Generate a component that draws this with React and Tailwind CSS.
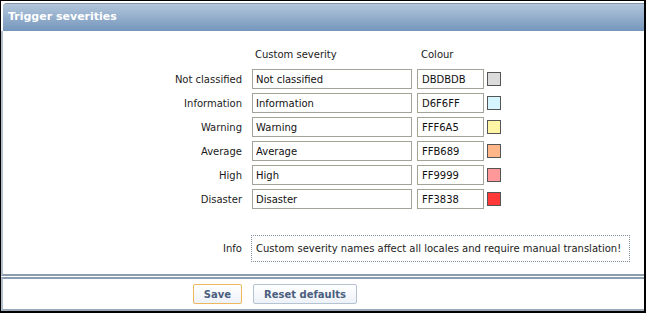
import React from 'react';

const SEVERITIES = [
  { label: 'Not classified', name: 'Not classified', colour: 'DBDBDB' },
  { label: 'Information', name: 'Information', colour: 'D6F6FF' },
  { label: 'Warning', name: 'Warning', colour: 'FFF6A5' },
  { label: 'Average', name: 'Average', colour: 'FFB689' },
  { label: 'High', name: 'High', colour: 'FF9999' },
  { label: 'Disaster', name: 'Disaster', colour: 'FF3838' },
];


const SeverityRow = ({ severity }) =>
{
  return (
    <div className="flex items-center h-[20px]">
      <div className="w-[239px] text-right">{severity.label}</div>
      <input
        readOnly
        value={severity.name}
        className="ml-[10px] w-[160px] h-[20px] border border-[#a3a39a] px-[3px] outline-none bg-white text-[#111]"
      />
      <input
        readOnly
        value={severity.colour}
        className="ml-[5px] w-[67px] h-[20px] border border-[#a3a39a] px-[4px] outline-none bg-white text-[#111]"
      />
      <div
        className="ml-[3px] w-[14px] h-[14px] border border-[#555]"
        style={{ backgroundColor: '#' + severity.colour }}
      />
    </div>
  );
};


const App = () =>
{
  return (
    <div className="w-[646px] h-[313px] bg-white border-black border-t border-l border-r-2 border-b-2 font-['DejaVu_Sans',sans-serif] text-[10px] text-[#1c1c1c] flex flex-col">

      <div className="pt-[2px] bg-white">
        <div className="ml-[2px] h-[28px] border-t border-[#8797a9] rounded-tl-[4px] bg-gradient-to-b from-[#b2c6db] to-[#7596bc] flex items-center pl-[5px]">
          <span className="text-white font-bold text-[11px]">Trigger severities</span>
        </div>
      </div>

      <div className="h-[245px] border-l-2 border-b-2 border-l-[#b3bfcb] border-b-[#8d9db0] pt-[16px]">
        <div className="flex h-[14px] items-center">
          <div className="w-[239px]" />
          <div className="ml-[13px] w-[161px]">Custom severity</div>
          <div className="ml-[5px]">Colour</div>
        </div>

        <div className="mt-[8px] flex flex-col gap-[4px]">
          {SEVERITIES.map((s) => (
            <SeverityRow key={s.label} severity={s} />
          ))}
        </div>

        <div className="mt-[26px] flex items-center">
          <div className="w-[239px] text-right">Info</div>
          <div className="ml-[9px] w-[379px] h-[27px] border border-dotted border-[#7f90a2] flex items-center pl-[4px]">
            Custom severity names affect all locales and require manual translation!
          </div>
        </div>
      </div>

      <div className="mt-[1px] flex-1 border-l-2 border-t-2 border-b-2 border-l-[#b3bfcb] border-t-[#8d9db0] border-b-[#9aa8b8] pt-[5px] pl-[190px] flex gap-[11px] items-start">
        <button className="w-[49px] h-[20px] rounded-[2px] border border-[#efb65e] bg-gradient-to-b from-white to-[#edf2f8] text-[#4a5e7e] font-bold text-[10px]">
          Save
        </button>
        <button className="w-[104px] h-[20px] rounded-[2px] border border-[#b5c2d2] bg-gradient-to-b from-white to-[#edf2f8] text-[#4a5e7e] font-bold text-[10px]">
          Reset defaults
        </button>
      </div>

    </div>
  );
};


export default App;
